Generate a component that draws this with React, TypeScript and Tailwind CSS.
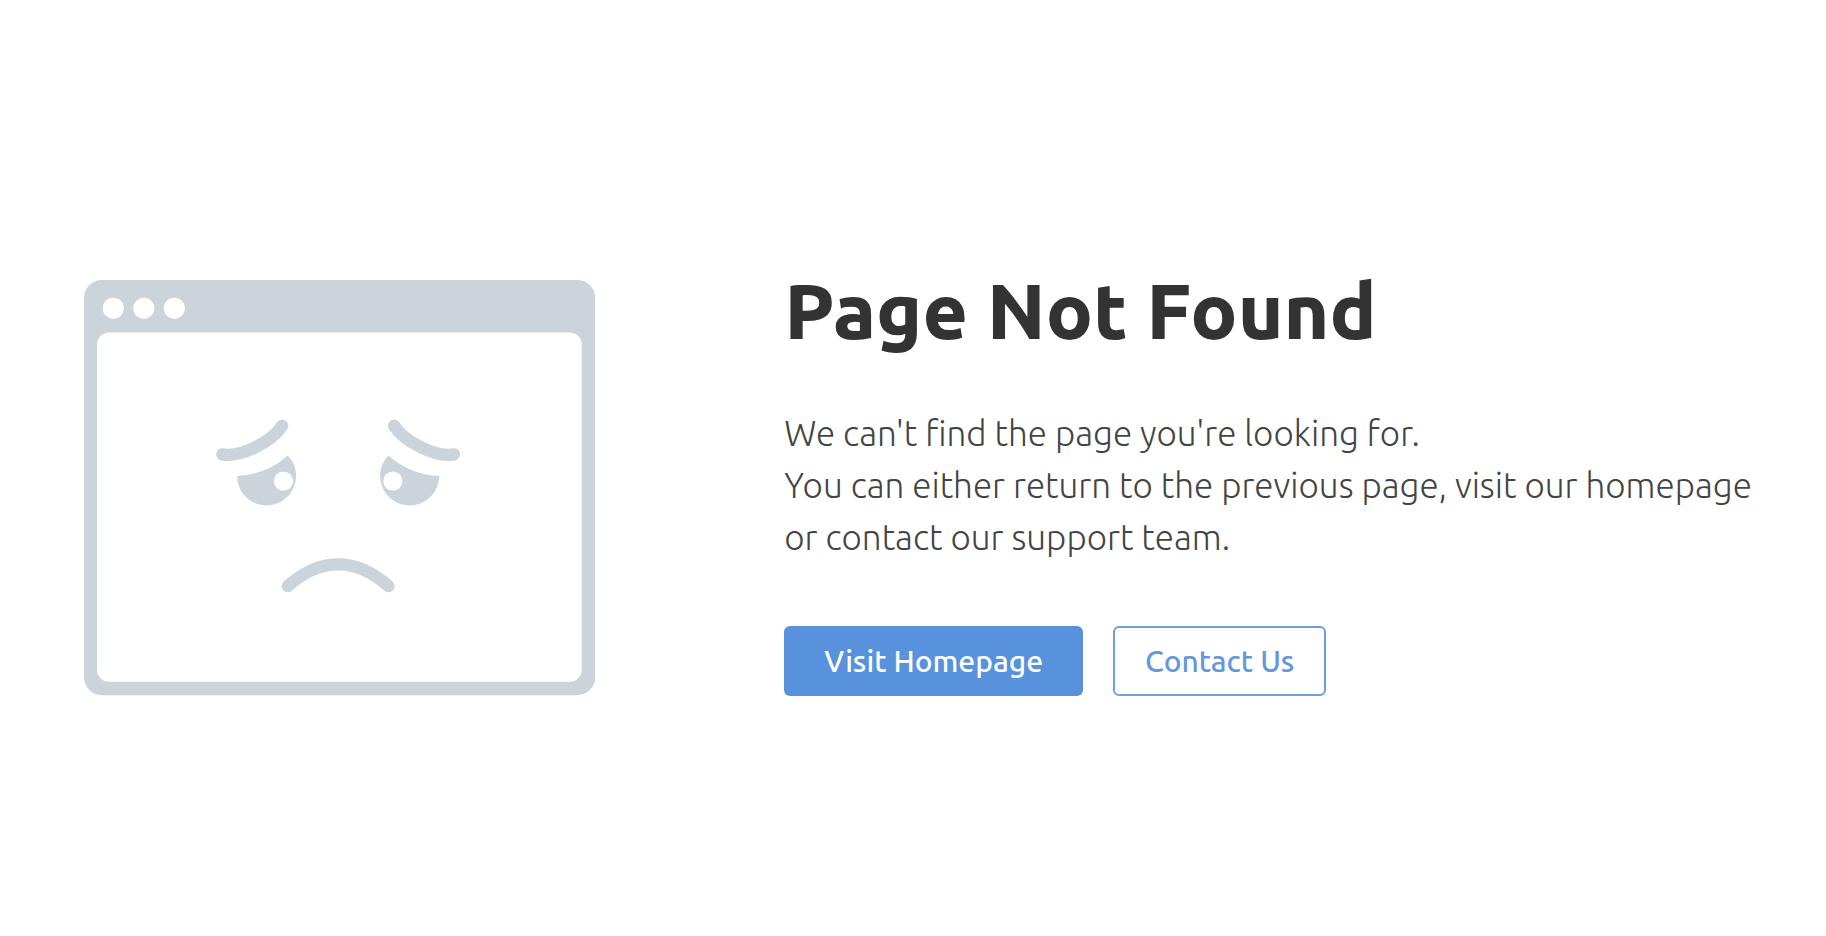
function SadBrowser() {
  const side = (
    <>
      <path d="M138.3 174.3C158 177.5 188 161 198 145.7" fill="none" stroke="#cbd4da" strokeWidth="12.4" strokeLinecap="round" />
      <path d="M153 196Q183 194 203.7 175.3A29.5 29.5 0 1 1 153 196Z" fill="#cbd4da" />
      <circle cx="199.3" cy="201" r="9.6" fill="#fff" />
    </>
  );
  return (
    <svg viewBox="0 0 511 415" className="w-[28vw] shrink-0" role="img" aria-label="Sad browser window">
      <rect width="511" height="415" rx="18" fill="#cbd4da" />
      <rect x="13" y="52.5" width="484.5" height="349" rx="12" fill="#fff" />
      <circle cx="29.3" cy="28.3" r="10.6" fill="#fff" />
      <circle cx="59.8" cy="28.3" r="10.6" fill="#fff" />
      <circle cx="90.3" cy="28.3" r="10.6" fill="#fff" />
      {side}
      <g transform="translate(508 0) scale(-1 1)">{side}</g>
      <path d="M203.7 306C236 277 272 277 304.3 306" fill="none" stroke="#cbd4da" strokeWidth="12.4" strokeLinecap="round" />
    </svg>
  );
}

export default function App() {
  return (
    <main className="flex min-h-screen items-center gap-[189px] bg-white pt-10 pr-14 pl-[84px] font-['Ubuntu','Noto_Sans',sans-serif] text-[#333]">
      <SadBrowser />
      <section className="min-w-0 flex-1 pb-1">
        <h1 className="text-[78px] leading-[68px] font-extrabold">Page Not Found</h1>
        <p className="mt-[63px] text-[35px] leading-[52px] font-light text-[#444]">
          We can't find the page you're looking for.
          <br />
          You can either return to the previous page, visit our homepage or contact our support team.
        </p>
        <div className="mt-[63px] flex gap-[30px]">
          <a href="#home" className="flex h-[70px] items-center rounded-[6px] bg-[#5892dc] px-10 text-[30px] font-medium text-white">
            Visit Homepage
          </a>
          <a href="#contact" className="flex h-[70px] items-center rounded-[6px] border-2 border-[#6b9fdf] px-[30px] text-[30px] font-medium text-[#6496dc]">
            Contact Us
          </a>
        </div>
      </section>
    </main>
  );
}
